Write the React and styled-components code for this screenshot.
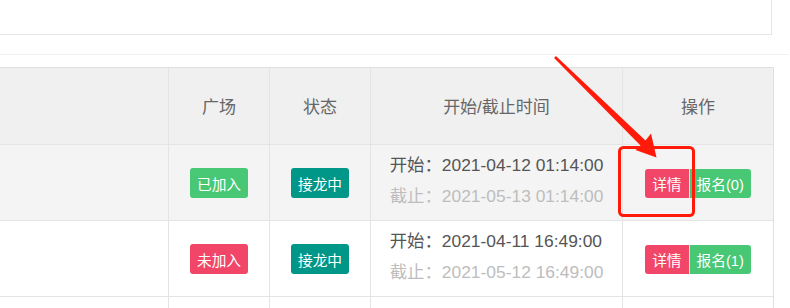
import React from "react";
import styled, { createGlobalStyle } from "styled-components";

const GlobalStyle = createGlobalStyle`
  html, body {
    margin: 0;
    padding: 0;
    background: #fff;
    font-family: "Liberation Sans", "Noto Sans CJK SC", sans-serif;
    overflow: hidden;
  }
`;

const rows = [
  {
    plaza: "已加入",
    joined: true,
    status: "接龙中",
    start: "2021-04-12 01:14:00",
    end: "2021-05-13 01:14:00",
    signups: 0,
    hover: true,
  },
  {
    plaza: "未加入",
    joined: false,
    status: "接龙中",
    start: "2021-04-11 16:49:00",
    end: "2021-05-12 16:49:00",
    signups: 1,
  },
];

const App = () => {
  return (
    <>
      <GlobalStyle />
      <Page>
        <TopCard />
        <Divider />
        <Table>
          <Row $header>
            <Cell />
            <HeadCell>广场</HeadCell>
            <HeadCell>状态</HeadCell>
            <HeadCell>开始/截止时间</HeadCell>
            <HeadCell>操作</HeadCell>
          </Row>
          {rows.map((r, i) => (
            <Row key={i} $hover={r.hover}>
              <Cell />
              <Cell>
                <Tag $color={r.joined ? "#48c774" : "#f14668"}>{r.plaza}</Tag>
              </Cell>
              <Cell>
                <Tag $color="#009688">{r.status}</Tag>
              </Cell>
              <Cell>
                <TimeBox>
                  <TimeLine>开始：{r.start}</TimeLine>
                  <TimeLine $muted>截止：{r.end}</TimeLine>
                </TimeBox>
              </Cell>
              <Cell>
                <Buttons>
                  <Btn $color="#f14668">详情</Btn>
                  <Btn $color="#48c774" $split>
                    报名({r.signups})
                  </Btn>
                </Buttons>
              </Cell>
            </Row>
          ))}
          <Row>
            <Cell />
            <Cell />
            <Cell />
            <Cell />
            <Cell />
          </Row>
        </Table>

        {/* annotation drawn on top of the screenshot */}
        <Overlay width="790" height="308" viewBox="0 0 790 308">
          <polygon
            fill="#ff1a0a"
            points="555.9,56 645.5,140.5 651,133.5 656.5,157.5 635.5,150 640.5,145.5 554.1,58"
          />
          <rect
            x="619.5"
            y="147.5"
            width="74"
            height="68"
            rx="4"
            fill="none"
            stroke="#ff1a0a"
            strokeWidth="3"
          />
        </Overlay>
      </Page>
    </>
  );
};

export default App;

const Page = styled.div`
  position: relative;
  width: 790px;
  height: 308px;
  overflow: hidden;
`;

const TopCard = styled.div`
  width: 771px;
  height: 34px;
  border-right: 1px solid #e6e6e6;
  border-bottom: 1px solid #e6e6e6;
`;

const Divider = styled.div`
  margin-top: 19px;
  width: 789px;
  height: 1px;
  background: #f2f2f2;
`;

const Table = styled.div`
  margin-top: 12px;
  width: 773px;
  border-top: 1px solid #e0e0e0;
  border-right: 1px solid #e0e0e0;
`;

const Row = styled.div`
  display: grid;
  grid-template-columns: 168px 100px 100px 251px 150px;
  column-gap: 1px;
  height: ${(p) => (p.$header ? "76px" : "75px")};
  background: #e4e4e4;
  border-bottom: 1px solid #e4e4e4;

  & > div {
    background: ${(p) => (p.$header ? "#f0f0f0" : p.$hover ? "#f4f4f4" : "#fff")};
  }
`;

const Cell = styled.div`
  display: flex;
  align-items: center;
  justify-content: center;
`;

const HeadCell = styled(Cell)`
  font-size: 17px;
  color: #666;
  padding-bottom: 2px;
`;

const Tag = styled.span`
  display: inline-flex;
  align-items: center;
  height: 30px;
  padding: 0 7px;
  border-radius: 3px;
  background: ${(p) => p.$color};
  color: #fff;
  font-size: 14.7px;
  margin-top: 1px;
`;

const TimeBox = styled.div`
  display: flex;
  flex-direction: column;
  padding-bottom: 3px;
`;

const TimeLine = styled.div`
  font-size: 17.4px;
  line-height: 31px;
  color: ${(p) => (p.$muted ? "#bdbdbd" : "#555")};
  white-space: nowrap;
`;

const Buttons = styled.div`
  display: flex;
  margin-top: 1px;
`;

const Btn = styled.span`
  display: inline-flex;
  align-items: center;
  height: 29px;
  padding: 0 7px;
  background: ${(p) => p.$color};
  color: #fff;
  font-size: 14.7px;
  border-radius: ${(p) => (p.$split ? "0 3px 3px 0" : "3px 0 0 3px")};
  border-left: ${(p) => (p.$split ? "1px solid #c9efd6" : "none")};
`;

const Overlay = styled.svg`
  position: absolute;
  top: 0;
  left: 0;
  pointer-events: none;
`;
